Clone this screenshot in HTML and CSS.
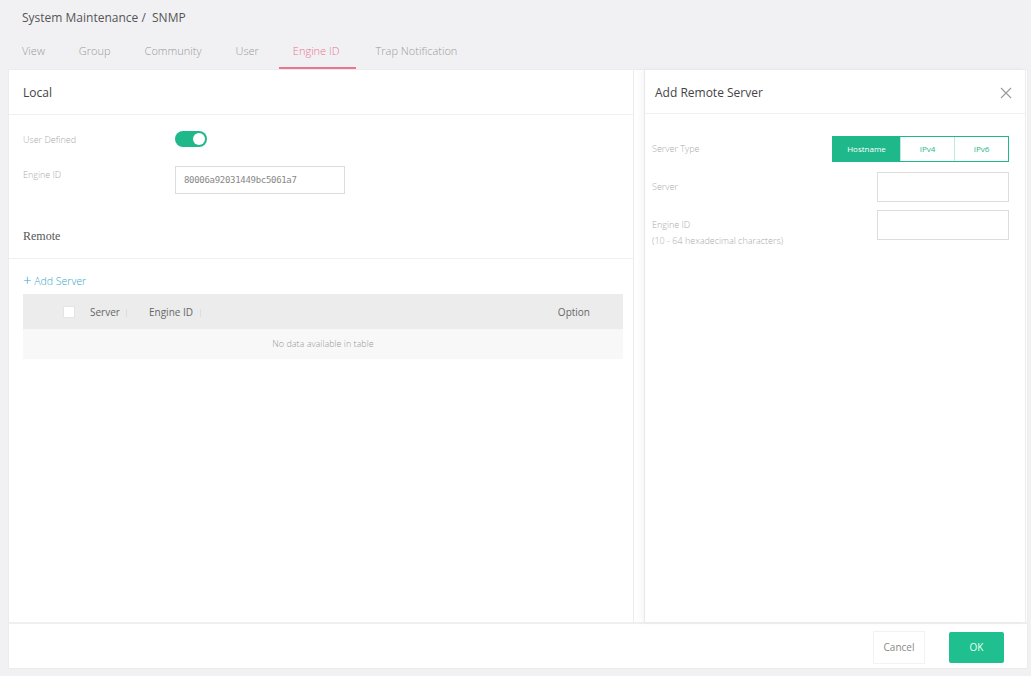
FILE: index.html
```html
<!DOCTYPE html>
<html lang="en">
<head>
    <meta charset="UTF-8">
    <title>System Maintenance / SNMP</title>
    <link rel="stylesheet" href="styles.css">
</head>
<body>

    <!-- Cabeçalho -->
    <div class="top">
        <div class="crumb">System Maintenance / &nbsp;SNMP</div>
        <div class="tabs">
            <span class="tab">View</span>
            <span class="tab">Group</span>
            <span class="tab">Community</span>
            <span class="tab">User</span>
            <span class="tab active">Engine ID</span>
            <span class="tab">Trap Notification</span>
        </div>
    </div>

    <div class="sheet">
        <div class="panels">

            <!-- Painel esquerdo -->
            <div class="left">
                <div class="section-title">Local</div>
                <div class="form">
                    <div class="row">
                        <span class="label">User Defined</span>
                        <span class="switch"><span class="knob"></span></span>
                    </div>
                    <div class="row">
                        <span class="label">Engine ID</span>
                        <span class="input mono">80006a92031449bc5061a7</span>
                    </div>
                </div>
                <div class="section-title remote">Remote</div>
                <div class="add"><span class="plus">+</span> Add Server</div>
                <div class="table">
                    <div class="thead">
                        <span class="check"></span>
                        <span class="th server">Server <i class="sort"></i></span>
                        <span class="th engine">Engine ID <i class="sort"></i></span>
                        <span class="th option">Option</span>
                    </div>
                    <div class="empty">No data available in table</div>
                </div>
            </div>

            <!-- Painel direito -->
            <div class="drawer">
                <div class="drawer-head">
                    <span>Add Remote Server</span>
                    <svg class="close" width="12" height="12" viewBox="0 0 12 12">
                        <path d="M1 1 L11 11 M11 1 L1 11" stroke="#999" stroke-width="1.1" fill="none"/>
                    </svg>
                </div>
                <div class="drawer-body">
                    <div class="drow">
                        <span class="label">Server Type</span>
                        <div class="seg">
                            <span class="seg-btn on">Hostname</span>
                            <span class="seg-btn">IPv4</span>
                            <span class="seg-btn">IPv6</span>
                        </div>
                    </div>
                    <div class="drow">
                        <span class="label">Server</span>
                        <span class="input small"></span>
                    </div>
                    <div class="drow">
                        <span class="label">Engine ID<br>(10 - 64 hexadecimal characters)</span>
                        <span class="input small"></span>
                    </div>
                </div>
            </div>
        </div>

        <div class="footer">
            <span class="btn cancel">Cancel</span>
            <span class="btn ok">OK</span>
        </div>
    </div>

</body>
</html>
```

FILE: styles.css
```css
body {
    margin: 0;
    background: #f1f1f4;
    font-family: "Open Sans", Arial, sans-serif;
    color: #555;
}
.top {
    padding: 8px 8px 0 8px;
}
.crumb {
    padding-left: 14px;
    font-size: 12px;
    color: #555;
    height: 20px;
    line-height: 20px;
}
.tabs {
    display: flex;
    margin-top: 14px;
}
.tab {
    padding: 0 14px;
    height: 27px;
    line-height: 18px;
    font-size: 11px;
    font-weight: 300;
    color: #999;
    margin-right: 6px;
}
.tab.active {
    color: #e8768f;
    border-bottom: 2px solid #e8768f;
    height: 25px;
    padding-right: 16px;
}
.sheet {
    margin: 0 3px 0 8px;
    background: #fff;
    border: 1px solid #ececec;
}
.panels {
    display: flex;
    height: 552px;
}
.left {
    width: 624px;
    border-right: 1px solid #ececec;
}
.section-title {
    height: 44px;
    line-height: 46px;
    padding-left: 14px;
    font-size: 12px;
    color: #444;
    border-bottom: 1px solid #f0f0f0;
}
.section-title.remote {
    font-family: "Liberation Serif", serif;
    font-size: 12px;
    line-height: 44px;
    color: #555;
}
.form {
    padding: 16px 14px 20px;
}
.row {
    display: flex;
    align-items: center;
    margin-bottom: 19px;
}
.row:last-child {
    margin-bottom: 0;
}
.row .label {
    width: 152px;
    align-self: flex-start;
    padding-top: 2px;
}
.label {
    font-size: 9px;
    font-weight: 300;
    color: #aaa;
}
.switch {
    display: inline-block;
    width: 32px;
    height: 16px;
    background: #1fb88a;
    border-radius: 8px;
    position: relative;
}
.knob {
    position: absolute;
    right: 2px;
    top: 2px;
    width: 12px;
    height: 12px;
    border-radius: 50%;
    background: #fff;
}
.input {
    display: inline-block;
    width: 170px;
    height: 28px;
    border: 1px solid #ddd;
    box-sizing: border-box;
    line-height: 26px;
    padding-left: 8px;
    font-size: 9px;
    color: #888;
}
.mono {
    font-family: "DejaVu Sans Mono", monospace;
    letter-spacing: -0.3px;
}
.add {
    padding: 13px 14px 6px;
    height: 16px;
    line-height: 16px;
    font-size: 10.5px;
    color: #3aa6cc;
    font-weight: 300;
}
.plus {
    font-size: 15px;
    vertical-align: -1px;
}
.table {
    margin: 0 10px 0 14px;
}
.thead {
    display: flex;
    align-items: center;
    height: 35px;
    background: #ececec;
    font-size: 10px;
    color: #666;
}
.check {
    width: 10px;
    height: 10px;
    background: #fff;
    border: 1px solid #e4e4e4;
    margin-left: 40px;
    margin-right: 15px;
}
.th .sort {
    display: inline-block;
    width: 1px;
    height: 8px;
    background: #ddd;
    margin-left: 4px;
    vertical-align: middle;
}
.server {
    width: 59px;
}
.engine {
    flex: 1;
}
.option {
    padding-right: 33px;
}
.empty {
    height: 30px;
    line-height: 30px;
    text-align: center;
    background: #f8f8f8;
    font-size: 9px;
    font-weight: 300;
    color: #999;
}
.drawer {
    margin-left: 10px;
    width: 380px;
    border-left: 1px solid #e8e8e8;
    border-right: 1px solid #ececec;
    box-shadow: -3px 0 6px rgba(0, 0, 0, 0.04);
}
.drawer-head {
    display: flex;
    justify-content: space-between;
    align-items: center;
    height: 44px;
    padding: 2px 10px 0 10px;
    box-sizing: border-box;
    font-size: 12px;
    color: #444;
    border-bottom: 1px solid #f0f0f0;
}
.close {
    margin-right: 3px;
}
.drawer-body {
    padding: 22px 16px 0 7px;
}
.drow {
    display: flex;
    justify-content: space-between;
    align-items: flex-start;
    margin-bottom: 8px;
}
.drow .label {
    line-height: 16px;
    padding-top: 7px;
}
.drow:first-child .label {
    padding-top: 5px;
}
.seg {
    display: flex;
    border: 1px solid #1fb88a;
    height: 24px;
    margin-bottom: 2px;
}
.seg-btn {
    width: 53px;
    line-height: 24px;
    text-align: center;
    font-size: 8px;
    color: #1fb88a;
    border-left: 1px solid #bfe9db;
}
.seg-btn.on {
    width: 67px;
    background: #1fb88a;
    color: #fff;
    border-left: none;
}
.input.small {
    width: 132px;
    height: 30px;
}
.footer {
    display: flex;
    justify-content: flex-end;
    align-items: center;
    height: 42px;
    border-top: 2px solid #efefef;
    padding-top: 2px;
    padding-right: 23px;
    gap: 24px;
}
.btn {
    display: inline-block;
    height: 31px;
    line-height: 31px;
    font-size: 10px;
    text-align: center;
}
.cancel {
    width: 50px;
    color: #888;
    border: 1px solid #f2f2f2;
}
.ok {
    width: 55px;
    background: #1fbf8f;
    color: #e8fff6;
    border-radius: 2px;
}
```
